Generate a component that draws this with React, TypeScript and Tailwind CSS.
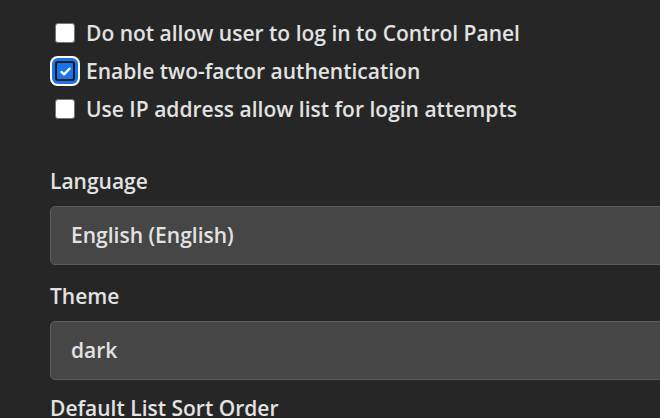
import React, { useState } from 'react';

const CheckRow: React.FC<{ label: string; checked?: boolean; focused?: boolean }> = ({ label, checked, focused }) => {
  const [on, setOn] = useState(!!checked);
  return (
    <label className="flex items-center h-[38px] gap-[11px] cursor-pointer">
      <span
        className={`flex items-center justify-center w-[20px] h-[20px] rounded-[3px] ${
          focused ? 'shadow-[0_0_0_3px_#1a73e8,0_0_0_5px_#ffffff]' : ''
        } ${on ? 'bg-[#1a73e8] border-2 border-[#1c1c1c]' : 'bg-white border border-[#767676]'}`}
        onClick={() => setOn(!on)}
      >
        {on && (
          <svg viewBox="0 0 16 16" className="w-[13px] h-[13px]" fill="none" stroke="white" strokeWidth="2.8" strokeLinecap="round" strokeLinejoin="round">
            <path d="M3 8.5l3.2 3L13 4.5" />
          </svg>
        )}
      </span>
      <span>{label}</span>
    </label>
  );
};

const SelectBox: React.FC<{ value: string }> = ({ value }) => (
  <div className="h-[59px] -mr-[40px] flex items-center pl-[20px] bg-[#464646] border border-[#5c5c5c] rounded-[5px]">
    {value}
  </div>
);

export default function App() {
  return (
    <div
      className="w-[660px] h-[418px] overflow-hidden bg-[#262626] text-[#e2e2e2] text-[21px] font-semibold leading-none"
      style={{ fontFamily: '"Open Sans", "Noto Sans", sans-serif' }}
    >
      <div className="pl-[50px] pt-[14px]">
        <div className="pl-[5px]">
          <CheckRow label="Do not allow user to log in to Control Panel" />
          <CheckRow label="Enable two-factor authentication" checked focused />
          <CheckRow label="Use IP address allow list for login attempts" />
        </div>
        <div className="mt-[43px] mb-[14px]">Language</div>
        <SelectBox value="English (English)" />
        <div className="mt-[21px] mb-[14px]">Theme</div>
        <SelectBox value="dark" />
        <div className="mt-[18px]">Default List Sort Order</div>
      </div>
    </div>
  );
}
